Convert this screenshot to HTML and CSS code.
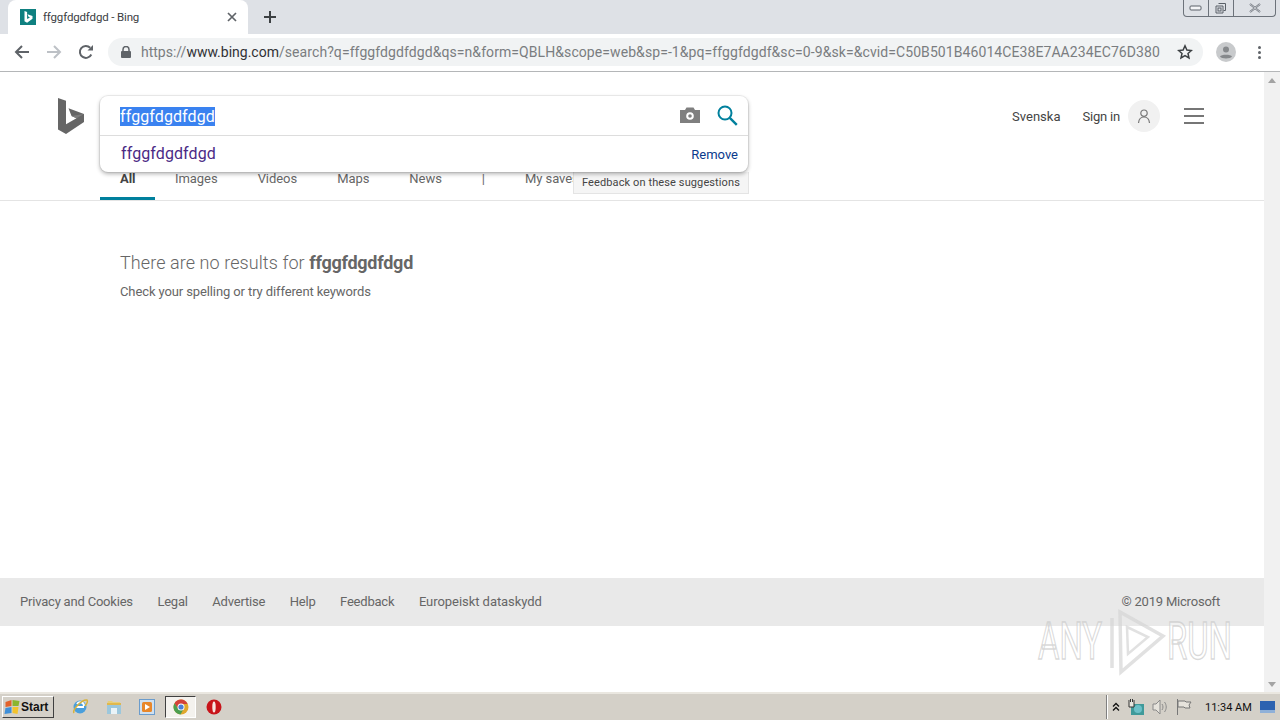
FILE: index.html
```html
<!DOCTYPE html>
<html lang="en">

<head>
    <meta charset="UTF-8">
    <title>ffggfdgdfdgd - Bing</title>
    <link rel="stylesheet" href="styles.css">
</head>

<body>
    <div class="tabstrip">
        <div class="tab">
            <svg class="favicon" width="16" height="16" viewBox="0 0 16 16">
                <rect width="16" height="16" fill="#0f8080"/>
                <path d="M4.5 2l2.6.9v7.2l2.9-1.700-1.500-.7-1-2.500 5 1.800v2.800L7.100 13.800 4.500 12.300z" fill="#fff"/>
            </svg>
            <span class="tab-title">ffggfdgdfdgd - Bing</span>
            <svg class="tab-close" width="10" height="10" viewBox="0 0 10 10">
                <path d="M1 1l8 8M9 1l-8 8" stroke="#5f6368" stroke-width="1.7"/>
            </svg>
        </div>
        <svg class="new-tab" width="12" height="12" viewBox="0 0 12 12">
            <path d="M6 0v12M0 6h12" stroke="#3c4043" stroke-width="2"/>
        </svg>
        <div class="win-buttons">
            <div class="win-btn win-min"><svg width="14" height="8" viewBox="0 0 14 8"><rect x="1" y="2" width="11" height="4" rx="1" fill="#f4f5f7" stroke="#5a6068"/></svg></div>
            <div class="win-btn win-max"><svg width="14" height="14" viewBox="0 0 14 14"><path d="M4.5 2.500h7v7h-2M2 5h7v7H2z" fill="none" stroke="#5a6068"/><rect x="4" y="7" width="3" height="3" fill="none" stroke="#5a6068"/></svg></div>
            <div class="win-btn win-close"><svg width="14" height="10" viewBox="0 0 14 10"><path d="M2 1l10 8M12 1L2 9" stroke="#6a7078" stroke-width="2"/><path d="M2 1l10 8M12 1L2 9" stroke="#e8eaee" stroke-width=".7"/></svg></div>
        </div>
    </div>

    <div class="toolbar">
        <svg class="nav-icon" width="16" height="14" viewBox="0 0 16 14"><path d="M15 7H2M8 1L2 7l6 6" fill="none" stroke="#5f6368" stroke-width="2"/></svg>
        <svg class="nav-icon" width="16" height="14" viewBox="0 0 16 14"><path d="M1 7h13M8 1l6 6-6 6" fill="none" stroke="#bdc1c6" stroke-width="2"/></svg>
        <svg class="nav-icon" width="16" height="16" viewBox="0 0 16 16"><path d="M13.300 10.500A6 6 0 1 1 12.200 3.700" fill="none" stroke="#5f6368" stroke-width="2"/><path d="M9.500 6.500H15V1z" fill="#5f6368"/></svg>
        <div class="omnibox">
            <svg class="lock" width="10" height="12" viewBox="0 0 10 12"><path d="M2 5V3.500a3 3 0 0 1 6 0V5" fill="none" stroke="#5f6368" stroke-width="1.5"/><rect y="5" width="10" height="7" rx="1" fill="#5f6368"/></svg>
            <div class="url"><span class="url-dim">https://</span><span class="url-host">www.bing.com</span><span class="url-dim url-path">/search?q=ffggfdgdfdgd&amp;qs=n&amp;form=QBLH&amp;scope=web&amp;sp=-1&amp;pq=ffggfdgdf&amp;sc=0-9&amp;sk=&amp;cvid=C50B501B46014CE38E7AA234EC76D380</span></div>
            <svg class="star" width="16" height="16" viewBox="0 0 16 16"><path d="M8 1.800l1.900 4.200 4.500.5-3.400 3 1 4.500L8 11.700 4 14l1-4.500-3.400-3 4.500-.5z" fill="none" stroke="#3c4043" stroke-width="1.5"/></svg>
        </div>
        <div class="profile">
            <svg width="20" height="20" viewBox="0 0 20 20"><circle cx="10" cy="10" r="10" fill="#c8cacc"/><circle cx="10" cy="7.500" r="3" fill="#85888b"/><path d="M4 14.500c1-2.500 11-2.500 12 0-1 2.500-11 2.500-12 0z" fill="#85888b"/></svg>
        </div>
        <div class="menu-dots"><i></i><i></i><i></i></div>
    </div>

    <div class="viewport">
        <div class="page">
            <header class="header">
                <div class="header-top">
                    <svg class="logo" width="26" height="36" viewBox="0 0 26 36">
                        <path d="M0 0l8 2.800v23.500l10.500-6-5-2.400-3-7.600L26 16v8L8 36 0 31.500z" fill="#666"/>
                        <path d="M8 26.300l10.500-6-5-2.400L26 16z" fill="#7d7d7d"/>
                    </svg>
                    <div class="search-gap"></div>
                    <a class="lang">Svenska</a>
                    <a class="signin">Sign in</a>
                    <div class="avatar">
                        <svg width="14" height="14" viewBox="0 0 14 14"><circle cx="7" cy="4.200" r="3.200" fill="none" stroke="#777" stroke-width="1.2"/><path d="M1.500 14c.3-3.500 2.300-6 5.500-6s5.200 2.500 5.500 6" fill="none" stroke="#777" stroke-width="1.2"/></svg>
                    </div>
                    <div class="hamburger"><i></i><i></i><i></i></div>
                </div>
                <nav class="tabs">
                    <a class="tabs-item tabs-active">All</a>
                    <a class="tabs-item">Images</a>
                    <a class="tabs-item">Videos</a>
                    <a class="tabs-item">Maps</a>
                    <a class="tabs-item">News</a>
                    <a class="tabs-item tabs-sep">|</a>
                    <a class="tabs-item">My saves</a>
                </nav>

                <div class="feedback-tip">Feedback on these suggestions</div>
                <div class="searchbox">
                    <div class="search-row">
                        <div class="search-field"><span class="search-value">ffggfdgdfdgd</span></div>
                        <svg class="camera" width="20" height="16" viewBox="0 0 20 16"><path d="M0 3h5l1.500-2.500h7L15 3h5v13H0z" fill="#7f7f7f"/><circle cx="10" cy="9" r="3.800" fill="#fff"/><circle cx="10" cy="9" r="1.800" fill="#7f7f7f"/></svg>
                        <svg class="magnifier" width="21" height="21" viewBox="0 0 21 21"><circle cx="8" cy="8" r="6.500" fill="none" stroke="#00809d" stroke-width="2"/><path d="M12.800 12.800l7 7" stroke="#00809d" stroke-width="2.4"/></svg>
                    </div>
                    <div class="suggest-row">
                        <span class="suggest-text">ffggfdgdfdgd</span>
                        <a class="suggest-remove">Remove</a>
                    </div>
                </div>
            </header>

            <main class="results">
                <h1 class="no-results">There are no results for <strong>ffggfdgdfdgd</strong></h1>
                <p class="hint">Check your spelling or try different keywords</p>
            </main>

            <footer class="footer">
                <a>Privacy and Cookies</a>
                <a>Legal</a>
                <a>Advertise</a>
                <a>Help</a>
                <a>Feedback</a>
                <a class="footer-long">Europeiskt dataskydd</a>
                <span class="copyright">© 2019 Microsoft</span>
            </footer>
            <div class="footer-after"></div>
        </div>
        <div class="scrollbar">
            <div class="arrow-up"></div>
            <div class="arrow-down"></div>
        </div>

        <svg class="watermark" width="204" height="72" viewBox="0 0 204 72">
            <g class="watermark-text">
                <text x="1" y="54" textLength="64" lengthAdjust="spacingAndGlyphs">ANY</text>
                <text x="130" y="54" textLength="65" lengthAdjust="spacingAndGlyphs">RUN</text>
            </g>
            <g fill="none" stroke="#d4d4d4" stroke-opacity=".7">
                <path d="M83 7l43 24-42 36z" stroke-width="3.5"/>
                <path d="M90 22l21 10-20 17z" stroke-width="2.5"/>
                <path d="M75 13v50" stroke-width="3.5"/>
            </g>
        </svg>
    </div>

    <div class="taskbar">
        <div class="start-btn">
            <svg width="17" height="16" viewBox="0 0 16 16"><path d="M1 3l6-2v6l-6 1z" fill="#e2622b"/><path d="M8 1l7 1-1 5H8z" fill="#8bb52f"/><path d="M1 9l6-1v6l-7 1z" fill="#3f8fd8"/><path d="M8 8h6l-1 7-5-1z" fill="#f3c32c"/></svg>
            <span>Start</span>
        </div>
        <div class="task-icons">
            <div class="task-icon">
                <svg width="18" height="18" viewBox="0 0 18 18"><circle cx="9" cy="9" r="6.500" fill="#4a9fdc"/><path d="M5 9h8M6 6c2-3 7-2 7 2" fill="none" stroke="#fff" stroke-width="2"/><path d="M3 15C1 12 11 1 16 2c1 1 0 4-2 6" fill="none" stroke="#d8b23a" stroke-width="1.5"/></svg>
            </div>
            <div class="task-icon">
                <svg width="16" height="16" viewBox="0 0 16 16"><path d="M1 5l1-3h4l1 1h7v3z" fill="#e8cf7a"/><rect x="1" y="5" width="14" height="10" fill="#9cc7dc"/><rect x="5" y="9" width="6" height="6" fill="#eaf3f7"/><path d="M1 5h14" stroke="#e0b84e" stroke-width="2"/></svg>
            </div>
            <div class="task-icon">
                <svg width="16" height="16" viewBox="0 0 16 16"><rect x=".5" y=".5" width="15" height="15" fill="#cfe0f0" stroke="#6b9ccc"/><rect x="3" y="3" width="10" height="10" rx="1.500" fill="#e8872a"/><path d="M6 5l5 3-5 3z" fill="#fff"/></svg>
            </div>
            <div class="task-icon task-icon-active">
                <svg width="16" height="16" viewBox="0 0 16 16"><circle cx="8" cy="8" r="7.500" fill="#e0a82e"/><path d="M8 .5a7.500 7.500 0 0 0-6.500 3.700L4.500 9 8 5h6.500A7.500 7.500 0 0 0 8 .5z" fill="#d3413a"/><path d="M1.500 4.200A7.500 7.500 0 0 0 7.500 15.500L10 11H6z" fill="#4b9e50"/><circle cx="8" cy="8" r="3.500" fill="#fff"/><circle cx="8" cy="8" r="2.600" fill="#4a7fd8"/></svg>
            </div>
            <div class="task-icon">
                <svg width="16" height="16" viewBox="0 0 16 16"><circle cx="8" cy="8" r="7.500" fill="#c8141a"/><ellipse cx="8" cy="8" rx="1.700" ry="5.500" fill="#f7e4e0"/></svg>
            </div>
        </div>
        <div class="tray">
            <svg width="8" height="10" viewBox="0 0 8 10"><path d="M1 4.500l3-3 3 3M1 8.500l3-3 3 3" fill="none" stroke="#111" stroke-width="1.3"/></svg>
            <svg width="16" height="16" viewBox="0 0 16 16"><rect x="3" y="5" width="13" height="11" fill="#3f9a9a"/><circle cx="10" cy="10" r="4" fill="#6cc0c8"/><path d="M1 1v7h5V1M2.500 0v3M4.500 0v3" fill="#e8e6df" stroke="#333"/></svg>
            <svg width="16" height="16" viewBox="0 0 16 16"><path d="M1 5h3l4-4v14l-4-4H1z" fill="#e6e3dc" stroke="#8a8a8a"/><path d="M10 5c1.300 2 1.300 4 0 6M12.500 3c2.300 3 2.300 7 0 10" fill="none" stroke="#8a8a8a"/></svg>
            <svg width="16" height="16" viewBox="0 0 16 16"><path d="M1.500 0v16" stroke="#777"/><path d="M2 2h7l1 1h5l-2 3 1 3H9L8 8H2z" fill="#e6e3dc" stroke="#777"/></svg>
            <span class="clock">11:34 AM</span>
            <svg class="show-desktop" width="15" height="12" viewBox="0 0 15 12"><rect width="15" height="12" fill="#2c62b0"/><rect y="9" width="15" height="3" fill="#8fb0d8"/></svg>
        </div>
    </div>
</body>

</html>
```

FILE: styles.css
```css
* {
    padding: 0;
    margin: 0;
    box-sizing: border-box;
}

body {
    width: 1280px;
    height: 720px;
    overflow: hidden;
    display: flex;
    flex-direction: column;
    background-color: #fff;
    font-family: Roboto, "Liberation Sans", sans-serif;
}

/* browser chrome */
.tabstrip {
    height: 34px;
    display: flex;
    align-items: flex-end;
    background-color: #dee1e6;
    position: relative;
}

.tab {
    width: 240px;
    height: 34px;
    margin-left: 8px;
    padding: 0 8px 0 12px;
    display: flex;
    align-items: center;
    background-color: #fff;
    border-radius: 8px 8px 0 0;
}

.favicon {
    flex-shrink: 0;
}

.tab-title {
    flex: 1;
    margin-left: 7px;
    font-size: 11.5px;
    letter-spacing: -.15px;
    color: #3c4043;
}

.tab-close {
    margin-right: 3px;
}

.new-tab {
    margin: 0 0 11px 16px;
}

.win-buttons {
    position: absolute;
    top: 0;
    right: 4px;
    width: 93px;
    height: 17px;
    display: flex;
    background-color: #dee1e6;
    border: 1px solid #6c727a;
    border-top: 0;
    border-radius: 0 0 4px 4px;
}

.win-btn {
    display: flex;
    align-items: center;
    justify-content: center;
}

.win-min {
    width: 25px;
    border-right: 1px solid #6c727a;
}

.win-max {
    width: 25px;
    border-right: 1px solid #6c727a;
}

.win-close {
    flex: 1;
}

.toolbar {
    height: 38px;
    display: flex;
    align-items: center;
    padding: 0 0 1px 14px;
    background-color: #fff;
    border-bottom: 1px solid #b4b6b8;
}

.nav-icon {
    margin-right: 16px;
}

.nav-icon:nth-child(3) {
    margin-right: 14px;
}

.omnibox {
    width: 1095px;
    height: 28px;
    display: flex;
    align-items: center;
    padding: 0 10px 0 13px;
    background-color: #f1f3f4;
    border-radius: 14px;
}

.lock {
    flex-shrink: 0;
}

.url {
    flex: 1;
    margin-left: 10px;
    font-size: 14px;
    white-space: nowrap;
    overflow: hidden;
}

.url-dim {
    color: #7a7d80;
}

.url-path {
    letter-spacing: .08px;
}

.url-host {
    color: #303134;
}

.profile {
    margin-left: 13px;
    height: 20px;
}

.menu-dots {
    margin-left: 22px;
    display: flex;
    flex-direction: column;
    gap: 2px;
}

.menu-dots i {
    display: block;
    width: 3px;
    height: 3px;
    background-color: #5f6368;
    border-radius: 50%;
}

/* page */
.viewport {
    height: 620px;
    display: flex;
    position: relative;
}

.page {
    flex: 1;
    display: flex;
    flex-direction: column;
}

.scrollbar {
    width: 16px;
    background-color: #f1f1f1;
    display: flex;
    flex-direction: column;
    justify-content: space-between;
    align-items: center;
    padding: 6px 0 5px;
}

.arrow-up {
    border: 4px solid transparent;
    border-top: 0;
    border-bottom: 5px solid #a3a3a3;
}

.arrow-down {
    border: 4px solid transparent;
    border-bottom: 0;
    border-top: 5px solid #a3a3a3;
}

.header {
    height: 129px;
    position: relative;
    border-bottom: 1px solid #e4e4e4;
    display: flex;
    flex-direction: column;
}

.header-top {
    height: 88px;
    margin-bottom: 4px;
    display: flex;
    align-items: center;
    padding: 0 60px 0 58px;
    font-size: 13px;
    color: #444;
}

.logo {
    flex-shrink: 0;
}

.search-gap {
    flex: 1;
}

.lang {
    margin-right: 22px;
}

.signin {
    margin-right: 8px;
    letter-spacing: -.2px;
}

.avatar {
    width: 32px;
    height: 32px;
    display: flex;
    align-items: center;
    justify-content: center;
    background-color: #f1f1f1;
    border-radius: 50%;
}

.hamburger {
    margin-left: 24px;
    width: 20px;
    display: flex;
    flex-direction: column;
    gap: 5px;
}

.hamburger i {
    display: block;
    height: 2px;
    background-color: #767676;
}

.tabs {
    flex: 1;
    display: flex;
    margin-left: 100px;
    font-size: 13px;
    letter-spacing: -.05px;
    color: #666;
}

.tabs-item {
    padding: 7px 20px 0;
    height: 36px;
    white-space: nowrap;
}

.tabs-active {
    width: 55px;
    color: #444;
    font-weight: 700;
    border-bottom: 3px solid #00809d;
}

.tabs-sep {
    padding: 7px 20px 0 20px;
}

.feedback-tip {
    position: absolute;
    left: 573px;
    top: 100px;
    width: 176px;
    height: 22px;
    padding: 4px 0 0 8px;
    font-size: 11px;
    letter-spacing: .11px;
    color: #444;
    background-color: #f5f5f5;
    border: 1px solid #e4e4e4;
    border-top: 0;
}

.searchbox {
    position: absolute;
    left: 100px;
    top: 24px;
    width: 648px;
    height: 76px;
    background-color: #fff;
    border-radius: 8px;
    box-shadow: 0 0 0 1px rgba(0, 0, 0, .06), 0 2px 4px rgba(0, 0, 0, .3);
}

.search-row {
    height: 40px;
    display: flex;
    align-items: center;
    padding: 0 10px 0 20px;
    border-bottom: 1px solid #ddd;
}

.search-field {
    flex: 1;
    padding-top: 1px;
}

.search-value {
    display: inline-block;
    height: 19px;
    line-height: 19px;
    font-size: 16px;
    letter-spacing: .1px;
    color: #fff;
    background-color: #3a82f0;
}

.camera {
    margin: 0 17px 1px 0;
}

.suggest-row {
    height: 36px;
    display: flex;
    align-items: center;
    justify-content: space-between;
    padding: 0 10px 2px 21px;
}

.suggest-text {
    font-size: 16px;
    letter-spacing: .1px;
    color: #4b2a85;
}

.suggest-remove {
    margin-top: 2px;
    font-size: 13px;
    color: #0a3a8c;
}

.results {
    flex: 1;
    padding: 50px 0 0 120px;
    color: #666;
}

.no-results {
    font-size: 18px;
    font-weight: 300;
    letter-spacing: .08px;
    line-height: 24px;
}

.no-results strong {
    font-weight: 700;
    letter-spacing: -.25px;
}

.hint {
    margin-top: 8px;
    font-size: 13px;
    letter-spacing: -.11px;
    line-height: 18px;
}

.footer {
    height: 48px;
    display: flex;
    align-items: center;
    gap: 24.5px;
    padding: 0 44px 2px 20px;
    background-color: #e9e9e9;
    font-size: 13px;
    letter-spacing: -.2px;
    color: #666;
}

.footer-long {
    letter-spacing: -.05px;
}

.copyright {
    margin-left: auto;
}

.footer-after {
    height: 66px;
}

/* any.run stamp over the page */
.watermark {
    position: absolute;
    left: 1037px;
    top: 533px;
}

.watermark-text {
    font-family: Roboto, sans-serif;
    font-size: 52px;
    font-weight: 400;
    fill: rgba(255, 255, 255, .4);
    stroke: rgba(200, 200, 200, .7);
    stroke-width: 1.5;
}

/* windows taskbar */
.taskbar {
    flex: 1;
    display: flex;
    align-items: center;
    padding-left: 2px;
    background-color: #d4d0c8;
    border-top: 2px solid #eae7e0;
}

.start-btn {
    width: 52px;
    height: 22px;
    display: flex;
    align-items: center;
    gap: 0;
    padding-left: 1px;
    background-color: #d4d0c8;
    border: 1px solid;
    border-color: #fff #404040 #404040 #fff;
    font-family: "Liberation Sans", sans-serif;
    font-size: 12px;
    font-weight: 700;
    color: #111;
}

.task-icons {
    display: flex;
    align-items: center;
    margin-left: 9.5px;
}

.task-icon {
    width: 33.5px;
    height: 22px;
    display: flex;
    align-items: center;
    justify-content: center;
}

.task-icon-active {
    width: 31px;
    margin: 0 1.25px;
    background-color: #f4f2ee;
    border: 1px solid;
    border-color: #404040 #fff #fff #404040;
}

.tray {
    width: 174px;
    margin-left: auto;
    height: 24px;
    display: flex;
    align-items: center;
    gap: 8px;
    padding-left: 5px;
    border-left: 1px solid #808080;
    box-shadow: inset 1px 0 0 #fff;
    font-size: 11px;
    color: #111;
}

.clock {
    margin-left: 5px;
    white-space: nowrap;
}
```
